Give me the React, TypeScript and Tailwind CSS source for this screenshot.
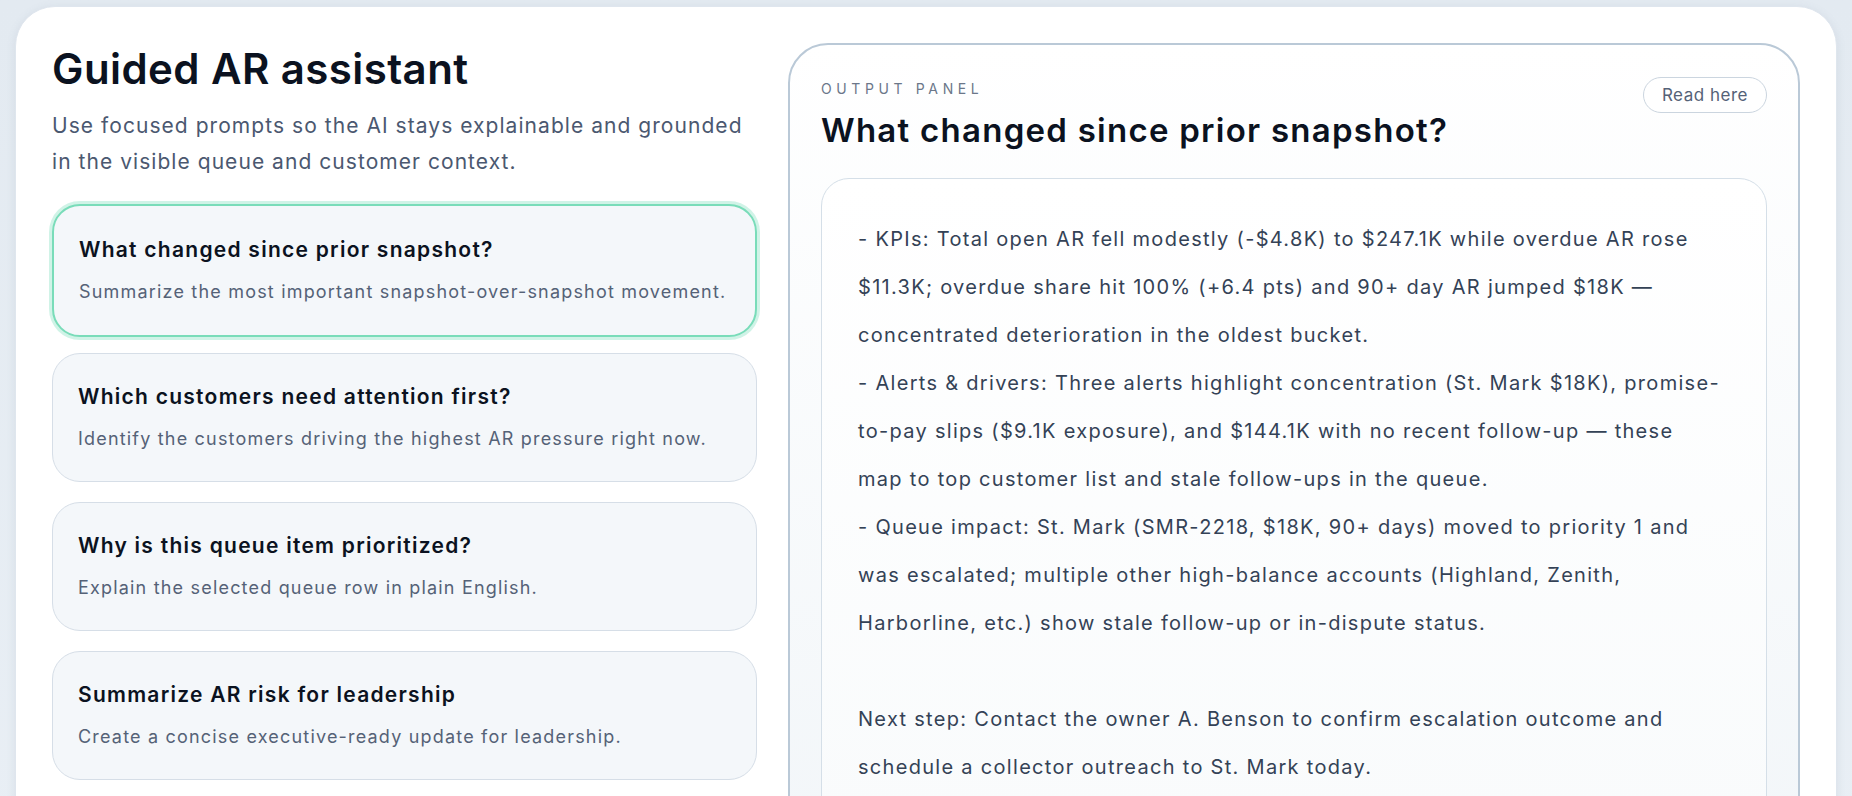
import clsx from 'clsx';

const PROMPTS = [
  {
    title: 'What changed since prior snapshot?',
    description: 'Summarize the most important snapshot-over-snapshot movement.',
  },
  {
    title: 'Which customers need attention first?',
    description: 'Identify the customers driving the highest AR pressure right now.',
  },
  {
    title: 'Why is this queue item prioritized?',
    description: 'Explain the selected queue row in plain English.',
  },
  {
    title: 'Summarize AR risk for leadership',
    description: 'Create a concise executive-ready update for leadership.',
  },
];

const ANSWER = `- KPIs: Total open AR fell modestly (-$4.8K) to $247.1K while overdue AR rose $11.3K; overdue share hit 100% (+6.4 pts) and 90+ day AR jumped $18K — concentrated deterioration in the oldest bucket.
- Alerts & drivers: Three alerts highlight concentration (St. Mark $18K), promise-to-pay slips ($9.1K exposure), and $144.1K with no recent follow-up — these map to top customer list and stale follow-ups in the queue.
- Queue impact: St. Mark (SMR-2218, $18K, 90+ days) moved to priority 1 and was escalated; multiple other high-balance accounts (Highland, Zenith, Harborline, etc.) show stale follow-up or in-dispute status.

Next step: Contact the owner A. Benson to confirm escalation outcome and schedule a collector outreach to St. Mark today.`;

const activeIndex = 0;

export default function App() {
  return (
    <div className="min-h-screen bg-gradient-to-b from-[#e3eaf1] to-[#e9eff5] px-[15px] pt-[6px] font-['Inter',sans-serif]">
      <div className="rounded-[40px] border border-[#dfe6ee] bg-white p-9 shadow-[0_2px_10px_rgba(100,116,139,0.12)]">
        <div className="grid grid-cols-[705px_1fr] gap-[31px]">
          {/* prompt list */}
          <section className="flex flex-col">
            <h1 className="mt-[3px] text-[42px] font-semibold leading-[46px] tracking-[0.01em] text-[#0b1220]">
              Guided AR assistant
            </h1>
            <p className="mt-4 text-[21px] leading-[36px] tracking-[0.05em] text-[#4b5870]">
              Use focused prompts so the AI stays explainable and grounded in the visible queue and
              customer context.
            </p>

            <div className="mt-[24px] flex flex-col gap-5">
              {PROMPTS.map((prompt, index) => (
                <button
                  key={prompt.title}
                  type="button"
                  className={clsx(
                    'flex flex-col justify-center gap-[14px] rounded-[28px] bg-[#f4f7fa] px-[25px] text-left',
                    index === activeIndex
                      ? '-mb-1 h-[133px] border-[2.5px] border-[#79dcb9] shadow-[0_0_0_3px_rgba(121,220,185,0.35)]'
                      : 'h-[129px] border-[1.5px] border-[#d6dee7]'
                  )}
                >
                  <span className="text-[21px] font-semibold leading-[28px] tracking-[0.06em] text-[#0b1220]">
                    {prompt.title}
                  </span>
                  <span className="text-[18px] leading-[28px] tracking-[0.066em] text-[#556277]">
                    {prompt.description}
                  </span>
                </button>
              ))}
            </div>
          </section>

          {/* output panel */}
          <section className="rounded-[40px] border-2 border-[#bac9d7] bg-gradient-to-b from-white to-[#f2f6f9] px-[31px] pt-[34px] pb-8">
            <div className="flex items-start justify-between gap-6">
              <div className="flex flex-col">
                <span className="text-[14px] leading-5 tracking-[0.33em] text-[#6b7789]">
                  OUTPUT PANEL
                </span>
                <h2 className="mt-[11px] text-[33px] font-semibold leading-[40px] tracking-[0.038em] text-[#0b1220]">
                  What changed since prior snapshot?
                </h2>
              </div>
              <button
                type="button"
                className="-mt-[2px] rounded-full border border-[#cbd5df] bg-white px-[18px] py-[6px] text-[17px] leading-[22px] tracking-[0.03em] text-[#556277]"
              >
                Read here
              </button>
            </div>

            <div className="mt-[28px] rounded-[28px] border border-[#d5dfe8] bg-gradient-to-b from-white to-[#f9fbfc] py-9 pl-9 pr-[45px]">
              <p className="whitespace-pre-wrap text-[20px] leading-[48px] tracking-[0.065em] text-[#344256]">
                {ANSWER}
              </p>
            </div>
          </section>
        </div>
      </div>
    </div>
  );
}
